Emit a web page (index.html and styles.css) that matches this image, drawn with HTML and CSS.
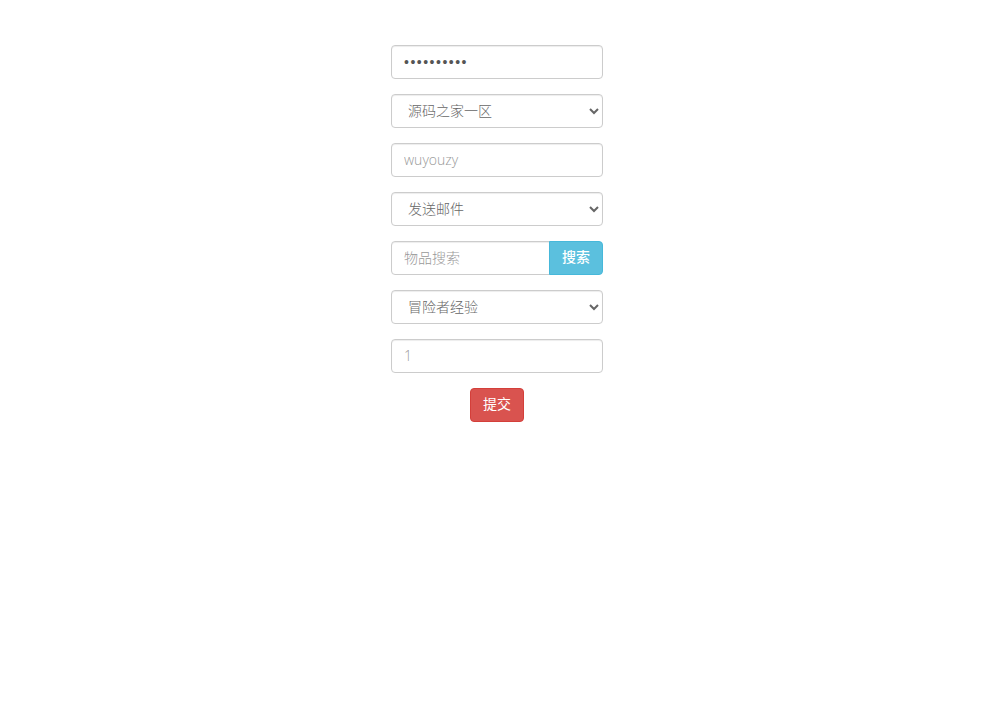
FILE: index.html
```html
<!DOCTYPE html>
<html lang="zh-CN">
<head>
<meta charset="utf-8">
<title>表单</title>
<link rel="stylesheet" href="styles.css">
</head>
<body>
<form class="panel">
  <div class="form-group">
    <input class="form-control password" type="password" value="1234567890">
  </div>
  <div class="form-group">
    <select class="form-control select">
      <option>源码之家一区</option>
    </select>
  </div>
  <div class="form-group">
    <input class="form-control" type="text" placeholder="wuyouzy">
  </div>
  <div class="form-group">
    <select class="form-control select">
      <option>发送邮件</option>
    </select>
  </div>
  <div class="form-group input-group">
    <input class="form-control group-input" type="text" placeholder="物品搜索">
    <button class="btn btn-info" type="button">搜索</button>
  </div>
  <div class="form-group">
    <select class="form-control select">
      <option>冒险者经验</option>
    </select>
  </div>
  <div class="form-group">
    <input class="form-control" type="text" placeholder="1">
  </div>
  <div class="actions">
    <button class="btn btn-danger" type="button">提交</button>
  </div>
</form>
</body>
</html>
```
FILE: styles.css
```css
html, body {
  margin: 0;
  padding: 0;
  background: #fff;
}
body {
  font-family: "Open Sans", "Noto Sans CJK SC", sans-serif;
  font-size: 14px;
  color: #333;
}
.panel {
  width: 212px;
  margin: 45px auto 0;
}
.form-group {
  margin-bottom: 15px;
}
.form-control {
  display: block;
  box-sizing: border-box;
  width: 100%;
  height: 34px;
  padding: 5px 12px 7px;
  font-family: inherit;
  font-size: 14px;
  font-weight: 300;
  line-height: 20px;
  color: #555;
  background: #fff;
  border: 1px solid #ccc;
  border-radius: 4px;
  box-shadow: inset 0 1px 1px rgba(0,0,0,.075);
  outline: none;
}
.form-control::placeholder {
  color: #999;
  font-weight: 300;
}
.password {
  font-family: "Liberation Sans", sans-serif;
  font-weight: 400;
  letter-spacing: 1.5px;
  padding-top: 6px;
  padding-bottom: 6px;
}
.select {
  padding: 5px 8px 7px 12px;
  color: #666;
}
.input-group {
  display: flex;
}
.group-input {
  flex: 1;
  min-width: 0;
  border-top-right-radius: 0;
  border-bottom-right-radius: 0;
}
.btn {
  box-sizing: border-box;
  height: 34px;
  padding: 5px 12px 7px;
  font-family: inherit;
  font-size: 14px;
  font-weight: 400;
  line-height: 20px;
  color: #fff;
  border: 1px solid transparent;
  border-radius: 4px;
  cursor: pointer;
}
.btn-info {
  width: 54px;
  background: #5bc0de;
  border-color: #46b8da;
  border-top-left-radius: 0;
  border-bottom-left-radius: 0;
  margin-left: -1px;
  font-weight: 500;
}
.btn-danger {
  width: 54px;
  background: #d9534f;
  border-color: #d43f3a;
}
.actions {
  display: flex;
  justify-content: center;
}
```
